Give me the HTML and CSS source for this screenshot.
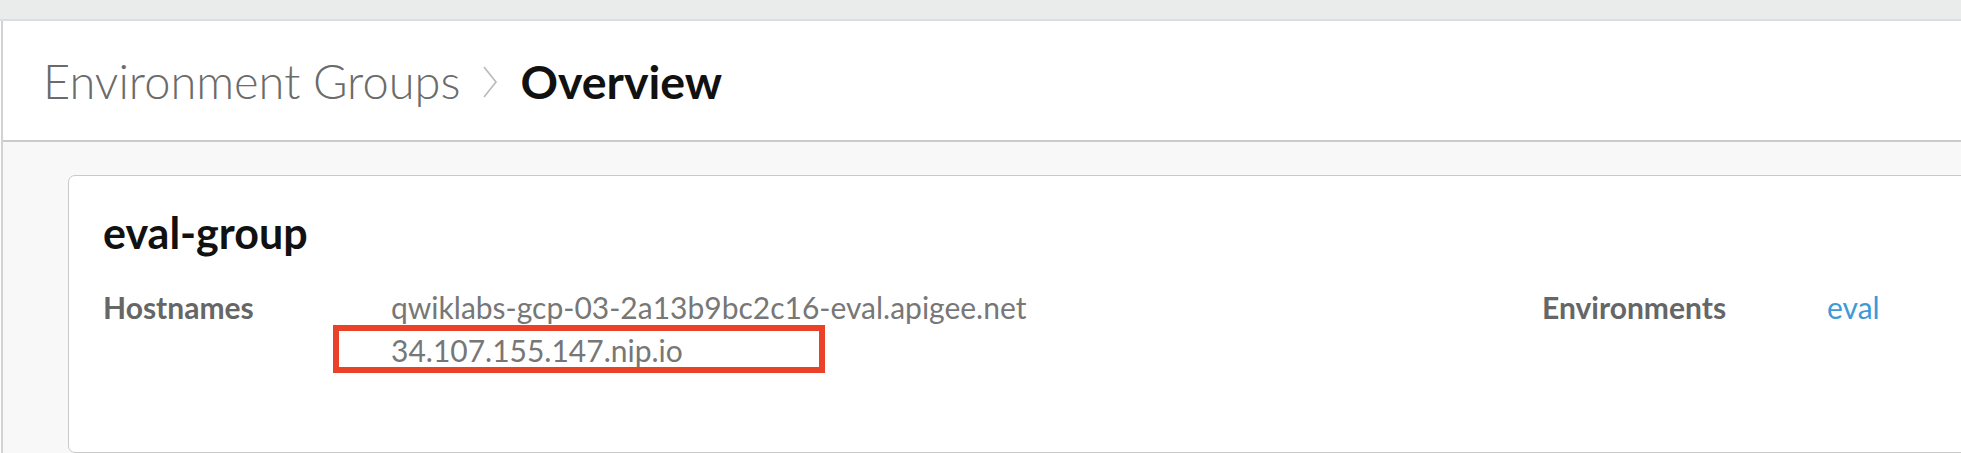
FILE: index.html
```html
<!DOCTYPE html>
<html lang="en">
<head>
<meta charset="utf-8">
<title>Environment Groups - Overview</title>
<link rel="stylesheet" href="styles.css">
</head>
<body>
<div class="topbar"></div>
<div class="page">
  <header class="page-header">
    <nav class="crumbs">
      <span class="crumb">Environment Groups</span>
      <svg class="chev" width="16" height="32" viewBox="0 0 16 32" aria-hidden="true"><polyline points="2,1 14,16 2,31" fill="none" stroke="#b9b9b9" stroke-width="1.6"/></svg>
      <h1 class="crumb-current">Overview</h1>
    </nav>
  </header>
  <main class="content">
    <section class="card">
      <h2 class="card-title">eval-group</h2>
      <div class="card-body">
        <div class="field field-hosts">
          <div class="label">Hostnames</div>
          <div class="values">
            <div class="value">qwiklabs-gcp-03-2a13b9bc2c16-eval.apigee.net</div>
            <div class="value highlighted">34.107.155.147.nip.io</div>
          </div>
        </div>
        <div class="field field-envs">
          <div class="label label-env">Environments</div>
          <div class="values">
            <a class="link" href="#">eval</a>
          </div>
        </div>
      </div>
    </section>
  </main>
</div>
</body>
</html>
```
FILE: styles.css
```css
*, *::before, *::after { box-sizing: border-box; }
html, body { margin: 0; padding: 0; background: #ffffff; }
body {
  font-family: Lato, "Open Sans", "Liberation Sans", sans-serif;
  width: 1961px;
  height: 453px;
  overflow: hidden;
}
.topbar {
  height: 21px;
  background: #eaeceb;
  border-bottom: 2px solid #dcdde3;
  height: 21px;
}
.page {
  margin-left: 1px;
  border-left: 2px solid #d2d2d2;
  height: 432px;
  display: flex;
  flex-direction: column;
}
.page-header {
  height: 121px;
  flex: none;
  background: #ffffff;
  border-bottom: 2px solid #cbcbcb;
  display: flex;
  align-items: center;
  padding-left: 40px;
  padding-top: 1px;
}
.crumbs {
  display: flex;
  align-items: center;
  gap: 22px;
}
.crumb {
  font-size: 47px;
  font-weight: 300;
  color: #6b6b6b;
  line-height: 1;
}
.chev { display: block; margin-top: 2px; }
.crumb-current {
  margin: 0;
  font-size: 46.5px;
  font-weight: 700;
  color: #111111;
  line-height: 1;
}
.content {
  flex: 1;
  background: #f7f8f7;
  padding: 33px 0 0 65px;
  overflow: hidden;
}
.card {
  width: 1960px;
  height: 278px;
  background: #ffffff;
  border: 1px solid #c9c9c9;
  border-radius: 7px;
  padding: 35px 0 0 34px;
}
.card-title {
  margin: 0 0 31px;
  font-size: 43px;
  font-weight: 700;
  color: #111111;
  line-height: 44px;
}
.card-body {
  display: flex;
}
.field {
  display: flex;
  align-items: flex-start;
}
.field-hosts { width: 1439px; }
.label {
  width: 288px;
  font-size: 30px;
  font-weight: 700;
  color: #666666;
  line-height: 43px;
}
.label-env { width: 285px; }
.value {
  font-size: 30px;
  font-weight: 400;
  color: #777777;
  line-height: 43px;
}
.highlighted { position: relative; }
.highlighted::after {
  content: "";
  position: absolute;
  left: -58px;
  top: -4px;
  width: 492px;
  height: 48px;
  border: 6px solid #ea4129;
}
.link {
  font-size: 30px;
  color: #3d9ad7;
  text-decoration: none;
  line-height: 43px;
}
```
